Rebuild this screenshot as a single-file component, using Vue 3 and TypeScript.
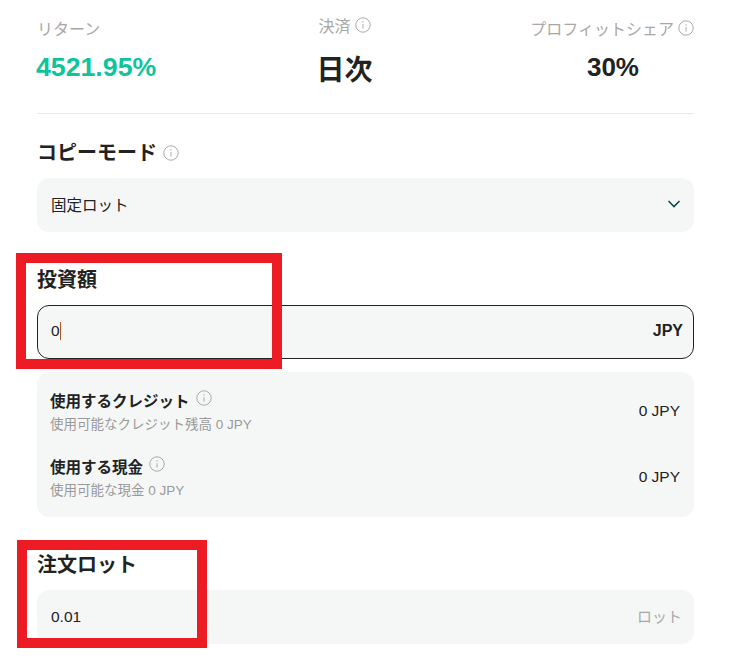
<script setup lang="ts">
const stats = [
  { label: 'リターン', value: '4521.95%', info: false, cls: 'left' },
  { label: '決済', value: '日次', info: true, cls: 'mid' },
  { label: 'プロフィットシェア', value: '30%', info: true, cls: 'right' },
]
const rows = [
  { title: '使用するクレジット', sub: '使用可能なクレジット残高 0 JPY', value: '0 JPY' },
  { title: '使用する現金', sub: '使用可能な現金 0 JPY', value: '0 JPY' },
]
</script>

<template>
  <div class="page">
    <div class="stats">
      <div v-for="s in stats" :key="s.label" class="stat" :class="s.cls">
        <div class="label">
          <span>{{ s.label }}</span>
          <svg v-if="s.info" class="info" viewBox="0 0 16 16">
            <circle cx="8" cy="8" r="7.2" />
            <path d="M8 7.2v4.4M8 4.2v1.4" />
          </svg>
        </div>
        <div class="value">{{ s.value }}</div>
      </div>
    </div>

    <div class="title mode">
      <span>コピーモード</span>
      <svg class="info" viewBox="0 0 16 16">
        <circle cx="8" cy="8" r="7.2" />
        <path d="M8 7.2v4.4M8 4.2v1.4" />
      </svg>
    </div>
    <div class="field raised">
      <span>固定ロット</span>
      <svg class="chev" viewBox="0 0 14 10">
        <path d="M1.5 2l5.5 5.5L12.5 2" />
      </svg>
    </div>

    <div class="title amount">投資額</div>
    <div class="field focused raised">
      <span class="caret-wrap">0<i class="caret"></i></span>
      <b class="unit">JPY</b>
    </div>

    <div class="card">
      <div v-for="r in rows" :key="r.title" class="row">
        <div>
          <div class="row-title">
            <span>{{ r.title }}</span>
            <svg class="info" viewBox="0 0 16 16">
              <circle cx="8" cy="8" r="7.2" />
              <path d="M8 7.2v4.4M8 4.2v1.4" />
            </svg>
          </div>
          <div class="row-sub">{{ r.sub }}</div>
        </div>
        <div class="row-value">{{ r.value }}</div>
      </div>
    </div>

    <div class="title lot">注文ロット</div>
    <div class="field">
      <span>0.01</span>
      <span class="muted">ロット</span>
    </div>

    <div class="mark mark-a"></div>
    <div class="mark mark-b"></div>
  </div>
</template>

<style scoped>
.page {
  position: relative;
  box-sizing: border-box;
  width: 732px;
  height: 661px;
  padding: 15px 38px 0 37px;
  background: #fff;
  color: #222;
  font-family: "Liberation Sans", "Noto Sans CJK JP", sans-serif;
  overflow: hidden;
}
.stats {
  display: grid;
  grid-template-columns: 1fr 1fr 1fr;
  height: 98px;
  border-bottom: 1px solid #e6e8e8;
}
.stat { display: flex; flex-direction: column; }
.stat.mid { align-items: center; margin-left: -32px; margin-top: -3px; margin-right: 10px; }
.stat.right { align-items: flex-end; margin-left: -60px; }
.label {
  display: flex;
  align-items: center;
  gap: 4px;
  height: 25px;
  font-size: 16px;
  color: #a8a8a8;
}
.value {
  margin-top: 10px;
  font-size: 26.7px;
  line-height: 34px;
  font-weight: 700;
}
.left .value { color: #0fc49c; margin-left: -1px; }
.mid .value { margin-top: 17px; font-size: 28px; }
.right .value { margin-right: 55px; font-size: 26px; }
.info {
  width: 16px;
  height: 16px;
  flex: none;
  fill: none;
  stroke: #a9a9a9;
  stroke-width: 1;
}
.title {
  font-size: 20px;
  font-weight: 700;
  line-height: 28px;
}
.mode {
  display: flex;
  align-items: center;
  gap: 6px;
  margin-top: 25px;
  margin-bottom: 11px;
}
.amount { margin-top: 34px; margin-bottom: 11px; }
.lot { margin-top: 34px; margin-bottom: 11px; }
.field {
  box-sizing: border-box;
  display: flex;
  align-items: center;
  justify-content: space-between;
  height: 54px;
  padding: 0 12px 0 14px;
  background: #f5f7f7;
  border-radius: 12px;
  font-size: 15.5px;
}
.raised { padding-bottom: 2px; }
.focused { border: 1.5px solid #222; padding-left: 13px; padding-right: 10px; }
.unit { font-size: 16px; }
.caret-wrap { display: flex; align-items: center; }
.caret {
  display: block;
  width: 1px;
  height: 18px;
  background: #b5541c;
}
.chev {
  width: 14px;
  height: 10px;
  margin-right: 1px;
  fill: none;
  stroke: #0b4a52;
  stroke-width: 1.6;
}
.muted { color: #a8a8a8; font-size: 15px; margin-bottom: 3px; }
.card {
  margin-top: 13px;
  height: 145px;
  box-sizing: border-box;
  padding: 17px 14px 0 13px;
  background: #f5f7f7;
  border-radius: 12px;
  display: flex;
  flex-direction: column;
  gap: 20px;
}
.row {
  display: flex;
  align-items: center;
  justify-content: space-between;
  height: 46px;
}
.row-title {
  display: flex;
  align-items: center;
  gap: 6px;
  font-size: 15.5px;
  font-weight: 700;
  line-height: 24px;
}
.row-title .info { margin-top: -8px; }
.row-sub {
  margin-top: 2px;
  font-size: 13.5px;
  line-height: 18px;
  color: #999;
}
.row-value { font-size: 15.5px; margin-top: -2px; }
.mark {
  position: absolute;
  box-sizing: border-box;
  border: 10px solid #ed1c24;
  pointer-events: none;
}
.mark-a { left: 16px; top: 253px; width: 266px; height: 116px; }
.mark-b { left: 17px; top: 540px; width: 190px; height: 108px; }
</style>
